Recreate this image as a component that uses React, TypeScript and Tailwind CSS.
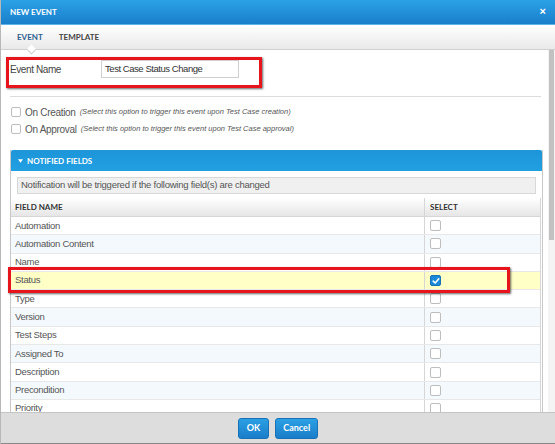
import React from 'react';

const fields = [
    'Automation',
    'Automation Content',
    'Name',
    'Status',
    'Type',
    'Version',
    'Test Steps',
    'Assigned To',
    'Description',
    'Precondition',
    'Priority',
];

const Box = ({ checked }: { checked?: boolean }) =>
    checked ? (
        <span className="w-[11px] h-[11px] rounded-[2px] bg-[#1a8ad8] border border-[#1672b5] flex items-center justify-center">
            <svg width="8" height="8" viewBox="0 0 8 8">
                <path d="M1.2 4.2 L3.2 6 L6.8 1.8" stroke="#fff" strokeWidth="1.6" fill="none" strokeLinecap="round" strokeLinejoin="round" />
            </svg>
        </span>
    ) : (
        <span className="w-[11px] h-[11px] rounded-[2px] bg-white border border-[#bdbdbd]"></span>
    );

export default function App() {
    return (
        <div className="w-[555px] h-[444px] flex flex-col bg-white overflow-hidden border-l border-[#b8b8b8] font-['Liberation_Sans',Arial,sans-serif]">
            {/* Title bar */}
            <div className="h-[25px] shrink-0 flex items-center justify-between px-[9px] bg-gradient-to-b from-[#2ba2e6] to-[#1a7ecb] border-b border-[#5eb3e8]">
                <span className="text-white text-[8px] font-bold font-['Lato',sans-serif]">NEW EVENT</span>
                <span className="text-white text-[11px] font-bold leading-none -mt-[2px]">×</span>
            </div>

            {/* Tabs */}
            <div className="h-[25px] shrink-0 relative flex items-center gap-[16px] pl-[16px] bg-gradient-to-b from-white to-[#e9e9e9] border-b border-[#cfcfcf]">
                <span className="text-[8px] font-bold font-['Lato',sans-serif] text-[#2b5f8f]">EVENT</span>
                <span className="text-[8px] font-bold font-['Lato',sans-serif] text-[#444]">TEMPLATE</span>
                <span className="absolute left-[27px] -bottom-[4px] w-[7px] h-[7px] bg-white border-r border-b border-[#cfcfcf] rotate-45"></span>
            </div>

            {/* Body */}
            <div className="flex-1 flex min-h-0 relative">
                <div className="flex-1 min-w-0 overflow-hidden pt-[10px] relative">
                    {/* Event name */}
                    <div className="h-[24px] flex items-start pl-[9px]">
                        <span className="text-[10px] tracking-[-0.4px] text-[#444] mt-[2px] w-[91px]">Event Name</span>
                        <div className="w-[138px] h-[18px] border border-[#cfcfcf] bg-white flex items-center pl-[3px] text-[9.5px] tracking-[-0.45px] text-[#333]">
                            Test Case Status Change
                        </div>
                    </div>
                    <div className="absolute left-[5px] top-[7px] w-[256px] h-[31px] border-[3px] border-[#e8141b] shadow-[1px_1px_2px_rgba(0,0,0,0.6)]"></div>

                    <div className="mx-[9px] mt-[12px] border-t border-[#dcdcdc] w-[531px]"></div>

                    {/* Options */}
                    <div className="pl-[10px] pt-[9px] flex flex-col gap-[5px]">
                        <div className="flex items-center gap-[4px] h-[12px]">
                            <span className="w-[10px] h-[10px] rounded-[2px] border border-[#bdbdbd]"></span>
                            <span className="text-[10px] tracking-[-0.3px] text-[#555]">On Creation</span>
                            <span className="text-[7.5px] italic text-[#555]">(Select this option to trigger this event upon Test Case creation)</span>
                        </div>
                        <div className="flex items-center gap-[4px] h-[12px]">
                            <span className="w-[10px] h-[10px] rounded-[2px] border border-[#bdbdbd]"></span>
                            <span className="text-[10px] tracking-[-0.3px] text-[#555]">On Approval</span>
                            <span className="text-[7.5px] italic text-[#555]">(Select this option to trigger this event upon Test Case approval)</span>
                        </div>
                    </div>

                    {/* Notified fields panel */}
                    <div className="ml-[9px] mt-[15px] w-[533px] border border-[#c8c8c8] border-t-0">
                        <div className="h-[21px] flex items-center gap-[4px] pl-[7px] bg-gradient-to-b from-[#1d95d9] to-[#21a0e2] rounded-t-[2px]">
                            <svg width="5" height="4" viewBox="0 0 6 4"><path d="M0 0 H6 L3 4 Z" fill="#fff" /></svg>
                            <span className="text-white text-[8px] font-bold font-['Lato',sans-serif]">NOTIFIED FIELDS</span>
                        </div>
                        <div className="px-[6px] pt-[6px] pb-[4px]">
                            <div className="h-[17px] border border-[#d8d8d8] bg-[#f0f0f0] flex items-center pl-[3px] text-[9.5px] tracking-[-0.25px] text-[#555]">
                                Notification will be triggered if the following field(s) are changed
                            </div>
                        </div>
                        <div className="mr-[1px] border-r border-[#d6d6d6]">
                            <div className="h-[19px] flex bg-gradient-to-b from-white to-[#e6e6e6] border-b border-[#d6d6d6]">
                                <div className="w-[413px] flex items-center pl-[4px] text-[8px] font-bold font-['Lato',sans-serif] text-[#333]">FIELD NAME</div>
                                <div className="flex-1 flex items-center pl-[5px] border-l border-[#d6d6d6] text-[8px] font-bold font-['Lato',sans-serif] text-[#333]">SELECT</div>
                            </div>
                            {fields.map((f, i) => {
                                const bg = f === 'Status' ? 'bg-[#ffffc6]' : i % 2 === 1 ? 'bg-[#f4f9fd]' : 'bg-white';
                                return (
                                    <div key={f} className={`h-[18.3px] flex border-b border-[#e8e8e8] ${bg}`}>
                                        <div className="w-[413px] flex items-center pl-[4px] text-[9.5px] tracking-[-0.3px] text-[#555]">{f}</div>
                                        <div className="flex-1 flex items-center pl-[5px] border-l border-[#d6d6d6]">
                                            <Box checked={f === 'Status'} />
                                        </div>
                                    </div>
                                );
                            })}
                        </div>
                    </div>
                    <div className="absolute left-[7px] top-[217px] w-[502px] h-[26px] border-[3px] border-[#e8141b] shadow-[1px_1px_2px_rgba(0,0,0,0.6)]"></div>
                </div>

                {/* Scrollbar */}
                <div className="w-[7px] shrink-0 flex flex-col bg-[#f4f4f4]">
                    <div className="h-[190px] mx-[1px] bg-[#c1c1c1]"></div>
                </div>
            </div>

            {/* Footer */}
            <div className="h-[32px] shrink-0 flex items-center justify-center gap-[6px] bg-[#dddddd] border-t border-[#c4c4c4] border-b border-b-[#888]">
                <button className="h-[21px] px-[8px] rounded-[3px] bg-gradient-to-b from-[#2ba0e4] to-[#1a7dc9] border border-[#1672b5] text-white text-[9px] font-bold font-['Lato',sans-serif]">OK</button>
                <button className="h-[21px] px-[7px] rounded-[3px] bg-gradient-to-b from-[#2ba0e4] to-[#1a7dc9] border border-[#1672b5] text-white text-[9px] font-bold font-['Lato',sans-serif]">Cancel</button>
            </div>
        </div>
    );
}
